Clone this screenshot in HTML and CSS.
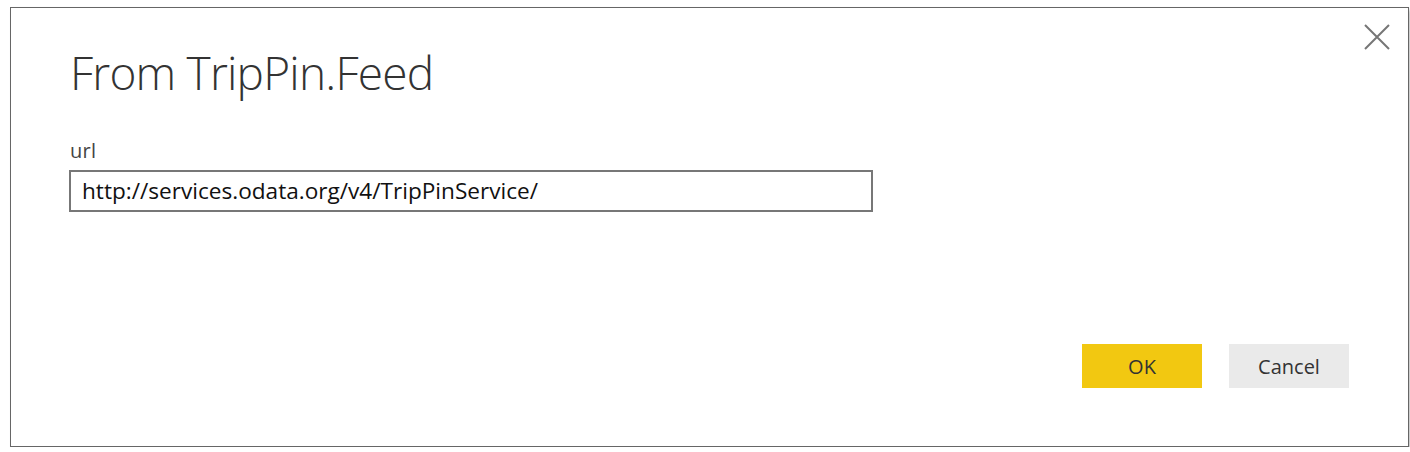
FILE: index.html
```html
<!DOCTYPE html>
<html>
<head>
<meta charset="utf-8">
<link rel="stylesheet" href="styles.css">
</head>
<body>
<div class="dialog">
  <div class="header">
    <h1 class="title">From TripPin.Feed</h1>
    <button class="close" aria-label="Close">
      <svg width="26" height="26" viewBox="0 0 26 26"><path d="M1 1 L25 25 M25 1 L1 25" stroke="#767676" stroke-width="2" fill="none"/></svg>
    </button>
  </div>
  <div class="field">
    <label class="label">url</label>
    <div class="input">http://services.odata.org/v4/TripPinService/</div>
  </div>
  <div class="footer">
    <button class="btn btn-ok">OK</button>
    <button class="btn btn-cancel">Cancel</button>
  </div>
</div>
</body>
</html>
```
FILE: styles.css
```css
html, body {
  margin: 0;
  padding: 0;
  background: #ffffff;
}
body {
  font-family: "Open Sans", "Noto Sans", sans-serif;
  color: #252423;
}
.dialog {
  box-sizing: border-box;
  margin: 7px 0 0 10px;
  width: 1399px;
  height: 440px;
  border: 1px solid #666666;
  background: #ffffff;
  box-shadow: 3px 3px 4px rgba(0, 0, 0, 0.22);
  display: flex;
  flex-direction: column;
  padding: 0 59px 58px 59px;
}
.header {
  display: flex;
  justify-content: space-between;
  align-items: flex-start;
}
.title {
  margin: 32px 0 0 0;
  font-weight: 300;
  font-size: 46px;
  line-height: 64px;
  color: #333333;
  letter-spacing: -0.8px;
}
.close {
  margin: 16px -41px 0 0;
  padding: 0;
  border: none;
  background: none;
  width: 26px;
  height: 26px;
  display: flex;
}
.field {
  margin-top: 34px;
  display: flex;
  flex-direction: column;
}
.label {
  font-size: 20px;
  line-height: 26px;
  color: #444444;
  letter-spacing: 0.3px;
}
.input {
  box-sizing: border-box;
  width: 804px;
  height: 42px;
  margin-top: 6px;
  margin-left: -1px;
  border: 2px solid #777777;
  padding: 0 11px;
  font-size: 22.6px;
  line-height: 38px;
  color: #111111;
}
.footer {
  margin-top: auto;
  display: flex;
  justify-content: flex-end;
  gap: 27px;
}
.btn {
  width: 120px;
  height: 44px;
  border: none;
  padding: 0;
  font-family: "Open Sans", "Noto Sans", sans-serif;
  font-size: 20px;
  color: #333333;
}
.btn-ok {
  background: #f2c811;
}
.btn-cancel {
  background: #eaeaea;
}
```
